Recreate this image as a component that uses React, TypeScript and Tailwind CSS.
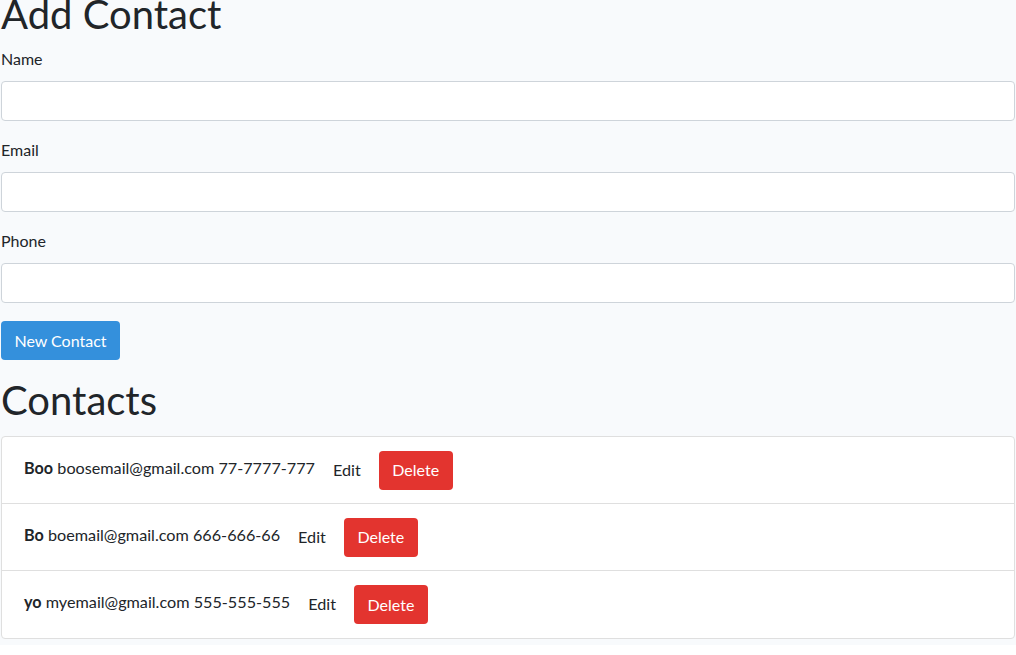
import { useState } from "react";

type Contact = {
  name: string;
  email: string;
  phone: string;
};

const initialContacts: Contact[] = [
  { name: "Boo", email: "boosemail@gmail.com", phone: "77-7777-777" },
  { name: "Bo", email: "boemail@gmail.com", phone: "666-666-66" },
  { name: "yo", email: "myemail@gmail.com", phone: "555-555-555" },
];

const fontStack = "font-['Lato',_'Liberation_Sans',_sans-serif]";

function Field({ label }: { label: string }) {
  return (
    <div className="mb-[17px]">
      <label className="mb-[11px] block h-[23px] text-[16px] leading-[23px] text-[#212529]">
        {label}
      </label>
      <input
        type="text"
        className="block h-[40px] w-full rounded-[4px] border border-[#ced4da] bg-white px-3 text-[16px] outline-none"
      />
    </div>
  );
}

export default function App() {
  const [contacts] = useState(initialContacts);

  return (
    <div className={`min-h-screen bg-[#f8fafc] px-[1px] text-[#212529] ${fontStack}`}>
      <h1 className="-mt-[10px] mb-[9px] h-[48px] text-[40px] leading-[48px] font-normal">
        Add Contact
      </h1>

      <Field label="Name" />
      <Field label="Email" />
      <Field label="Phone" />

      <button className="mt-[1px] h-[39px] w-[119px] rounded-[4px] bg-[#3490dc] text-[16px] text-white">
        New Contact
      </button>

      <h2 className="mt-[16px] mb-[12px] h-[48px] text-[40px] leading-[48px] font-normal">
        Contacts
      </h2>

      <ul className="overflow-hidden rounded-[4px] border border-[#dfdfdf] bg-white">
        {contacts.map((contact, i) => (
          <li
            key={contact.email}
            className={
              i === 0
                ? "flex h-[66px] items-center pl-[22px]"
                : i === contacts.length - 1
                  ? "flex h-[68px] items-center border-t border-[#dfdfdf] pl-[22px]"
                  : "flex h-[67px] items-center border-t border-[#dfdfdf] pl-[22px]"
            }
          >
            <span className="-mt-[4px] text-[16.2px]">
              <strong className="font-bold">{contact.name}</strong> {contact.email}{" "}
              {contact.phone}
            </span>
            <span className="ml-[18px] text-[16.2px]">Edit</span>
            <button className="ml-[18px] h-[39px] w-[74px] rounded-[4px] bg-[#e3342f] text-[16px] text-white">
              Delete
            </button>
          </li>
        ))}
      </ul>
    </div>
  );
}
